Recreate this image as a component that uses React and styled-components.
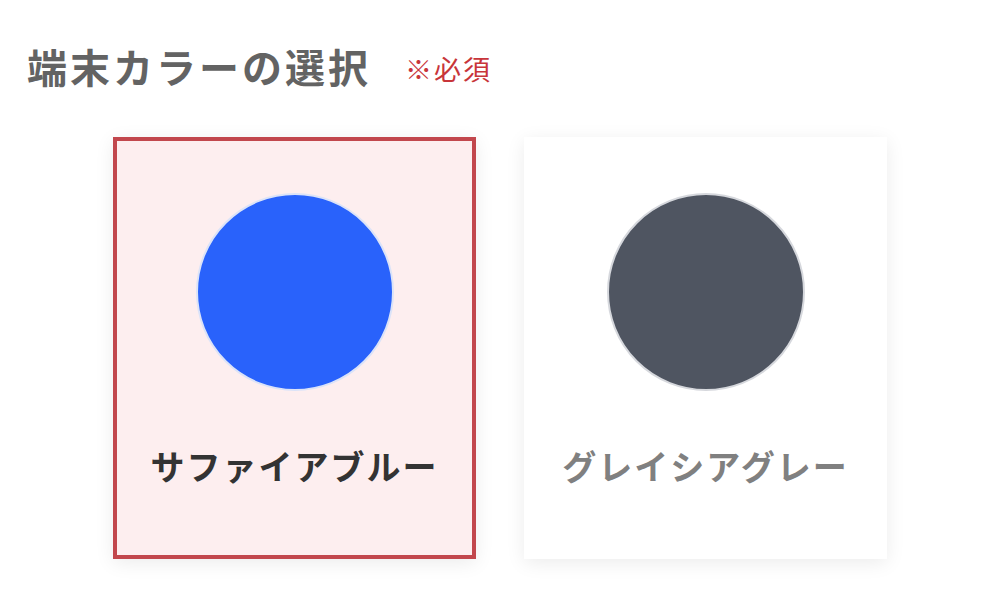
import React, { useState } from "react";
import styled, { createGlobalStyle } from "styled-components";

const GlobalStyle = createGlobalStyle`
  html, body {
    margin: 0;
    padding: 0;
    background: #ffffff;
  }
  body {
    font-family: "Noto Sans CJK JP", "Noto Sans", sans-serif;
  }
`;

const colors = [
  { id: "blue", name: "サファイアブルー", hex: "#2962fb", rim: "#dbe3f8" },
  { id: "gray", name: "グレイシアグレー", hex: "#4f5561", rim: "#d6d8dd" },
];

const Page = () => {
  const [selected, setSelected] = useState("blue");

  return (
    <Wrapper>
      <Heading>
        <h2>端末カラーの選択</h2>
        <span>※必須</span>
      </Heading>
      <Options>
        {colors.map((c) => (
          <Option
            key={c.id}
            $active={selected === c.id}
            onClick={() => setSelected(c.id)}
          >
            <Swatch $color={c.hex} $rim={c.rim} />
            <Label $active={selected === c.id}>{c.name}</Label>
          </Option>
        ))}
      </Options>
    </Wrapper>
  );
};

const Wrapper = styled.div`
  width: 1000px;
  height: 606px;
  box-sizing: border-box;
  padding: 40px 0 0 27px;
  overflow: hidden;
`;

const Heading = styled.div`
  display: flex;
  align-items: center;
  gap: 34px;

  h2 {
    margin: 0;
    font-size: 40px;
    line-height: 52px;
    font-weight: 700;
    color: #636363;
    letter-spacing: 3px;
  }

  span {
    font-size: 27px;
    line-height: 40px;
    color: #c8353a;
    letter-spacing: 2px;
    margin-top: 6px;
  }
`;

const Options = styled.div`
  display: flex;
  justify-content: center;
  gap: 48px;
  margin: 45px 0 0 -27px;
`;

const Option = styled.button`
  width: 363px;
  height: 422px;
  box-sizing: border-box;
  display: flex;
  flex-direction: column;
  align-items: center;
  padding: 52px 0 0;
  border: 4px solid ${(p) => (p.$active ? "#c2474d" : "transparent")};
  background: ${(p) => (p.$active ? "#fdeeef" : "#ffffff")};
  box-shadow: 0 4px 18px rgba(0, 0, 0, 0.08);
  cursor: pointer;
  font-family: inherit;
`;

const Swatch = styled.div`
  width: 198px;
  height: 198px;
  box-sizing: border-box;
  border-radius: 50%;
  background: ${(p) => p.$color};
  border: 2px solid ${(p) => p.$rim};
`;

const Label = styled.div`
  margin-top: 53px;
  font-size: 34px;
  line-height: 44px;
  font-weight: 700;
  letter-spacing: 2px;
  color: ${(p) => (p.$active ? "#333333" : "#808080")};
`;

export default function App() {
  return (
    <>
      <GlobalStyle />
      <Page />
    </>
  );
}
